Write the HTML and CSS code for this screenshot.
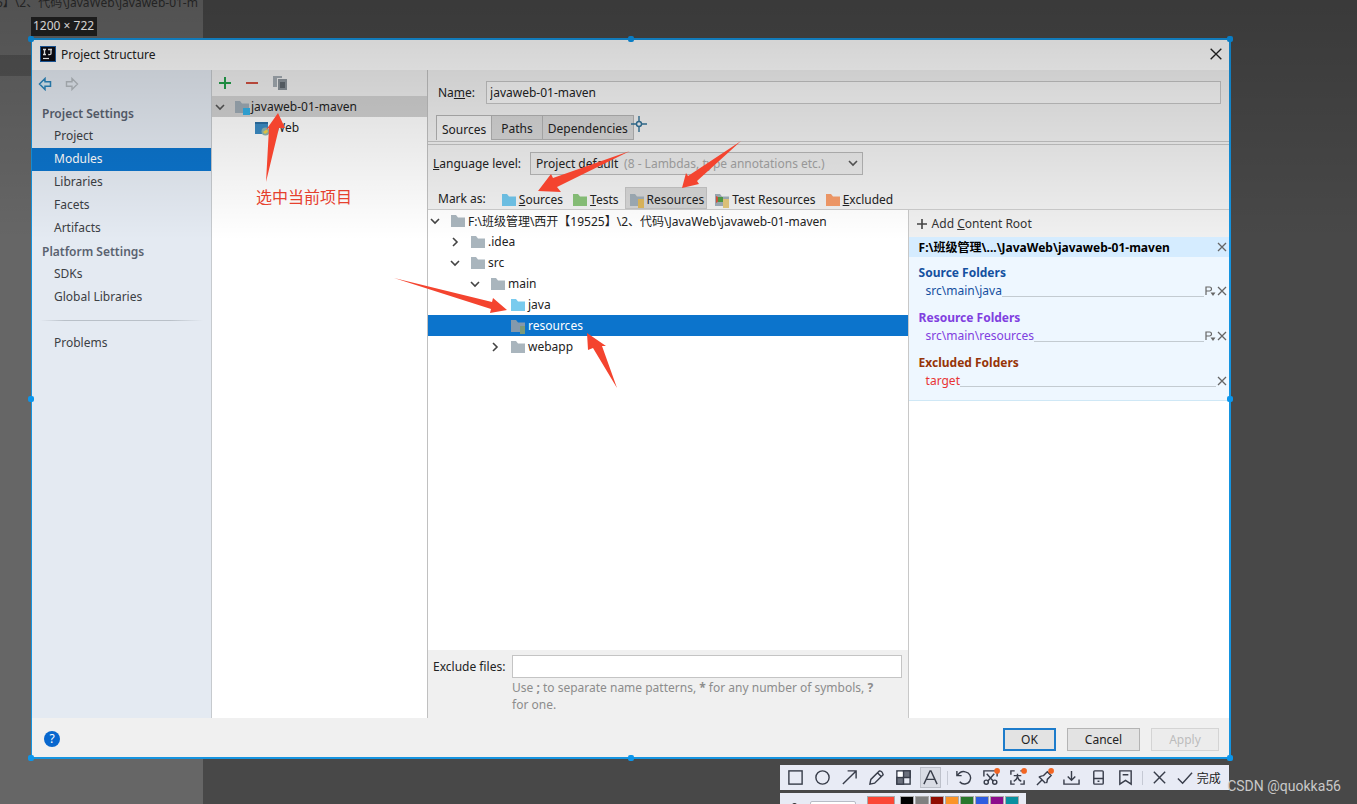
FILE: index.html
```html
<!DOCTYPE html>
<html lang="en">
<head>
<meta charset="utf-8">
<title>Project Structure</title>
<link rel="stylesheet" href="styles.css">
</head>
<body>
<svg class="defs" width="0" height="0" aria-hidden="true">
  <symbol id="folder" viewBox="0 0 16 16"><path d="M1 2h5l2 2.500h7V14H1z" fill="currentColor"/></symbol>
  <symbol id="down" viewBox="0 0 12 12"><path d="M2 4l4 4 4-4" fill="none" stroke="currentColor" stroke-width="1.600"/></symbol>
  <symbol id="right" viewBox="0 0 12 12"><path d="M4 2l4 4-4 4" fill="none" stroke="currentColor" stroke-width="1.600"/></symbol>
  <symbol id="cross" viewBox="0 0 12 12"><path d="M2 2l8 8M10 2l-8 8" fill="none" stroke="currentColor" stroke-width="1.300"/></symbol>
  <symbol id="prefix" viewBox="0 0 12 12"><path d="M2 10V2h3.500a2 2 0 0 1 0 4H2" fill="none" stroke="currentColor" stroke-width="1.200"/><path d="M6.500 7.500h5L9 11z" fill="currentColor"/></symbol>
</svg>
<div class="desktop">
  <div class="behind">5】\2、代码\JavaWeb\javaweb-01-m</div>
  <div class="behind-band"></div>
  <div class="size-tag">1200 × 722</div>

  <main class="window">
    <header class="titlebar">
      <svg class="logo" viewBox="0 0 16 16"><rect width="16" height="16" fill="#1d5fa8"/><rect x="1" y="1" width="14" height="14" fill="#0c0c14"/><path d="M3 3.500h3M4.500 3.500v5M3 8.500h3M8 3.500h4M11 3.500v4q0 1.500-2.800 1" stroke="#fff" stroke-width="1.300" fill="none"/><path d="M3 12.500h6" stroke="#fff" stroke-width="1.200"/></svg>
      <h1 class="title">Project Structure</h1>
      <button class="close" aria-label="Close"><svg width="16" height="16" viewBox="0 0 12 12"><path d="M2 2l8 8M10 2l-8 8" stroke="#222" stroke-width="1"/></svg></button>
    </header>

    <div class="content">
      <nav class="sidebar">
        <div class="history">
          <button aria-label="Back"><svg width="14" height="14" viewBox="0 0 14 14"><path d="M7 1.500L1.500 7 7 12.500V9.200h5.500V4.800H7z" fill="#d8ecf7" stroke="#2c86bd" stroke-width="1.500"/></svg></button>
          <button aria-label="Forward"><svg width="14" height="14" viewBox="0 0 14 14"><path d="M7 1.500L12.500 7 7 12.500V9.200H1.500V4.800H7z" fill="none" stroke="#b5bbc0" stroke-width="1.400"/></svg></button>
        </div>
        <h2>Project Settings</h2>
        <a href="#">Project</a>
        <a href="#" class="active">Modules</a>
        <a href="#">Libraries</a>
        <a href="#">Facets</a>
        <a href="#">Artifacts</a>
        <h2>Platform Settings</h2>
        <a href="#">SDKs</a>
        <a href="#">Global Libraries</a>
        <div class="divider"></div>
        <a href="#">Problems</a>
      </nav>

      <section class="modules">
        <div class="tools">
          <button aria-label="Add"><svg width="14" height="14" viewBox="0 0 14 14"><path d="M7 1v12M1 7h12" stroke="#23a04b" stroke-width="2"/></svg></button>
          <button aria-label="Remove"><svg width="14" height="14" viewBox="0 0 14 14"><path d="M1 7h12" stroke="#d05142" stroke-width="2"/></svg></button>
          <button aria-label="Copy"><svg width="16" height="16" viewBox="0 0 16 16"><path d="M1 1h9v2H5v9H1z" fill="#a3abb2"/><path d="M6 4h9v11H6z" fill="#8a9299"/><path d="M8 7h5v6H8z" fill="#5e666d"/></svg></button>
        </div>
        <div class="module selected">
          <svg class="chev" width="12" height="12"><use href="#down"/></svg>
          <svg class="icon" width="16" height="16" viewBox="0 0 16 16"><path d="M1 2h5l2 2.500h7V14H1z" fill="#9eabb5"/><path d="M9 9h7v7H9z" fill="#35b0e6"/></svg>
          <span>javaweb-01-maven</span>
        </div>
        <div class="module child">
          <svg class="icon" width="16" height="16" viewBox="0 0 16 16"><path d="M1 2h13v12H1z" fill="#3b8bc4"/><path d="M1 2h13v2H1z" fill="#2b6fa3"/><circle cx="11.500" cy="11.500" r="4" fill="#8fb6b0"/><path d="M9 12l4-3 1 3-3 2z" fill="#f0d24a"/></svg>
          <span>Web</span>
        </div>
        <p class="note">选中当前项目</p>
      </section>

      <section class="editor">
        <div class="name-row">
          <label for="name">Na<u>m</u>e:</label>
          <input id="name" type="text" value="javaweb-01-maven">
        </div>
        <div class="tabs" role="tablist">
          <button role="tab" class="on">Sources</button><button role="tab">Paths</button><button role="tab">Dependencies</button>
        </div>
        <div class="level-row">
          <label for="level"><u>L</u>anguage level:</label>
          <div class="combo">
            <select id="level"><option>Project default</option></select>
            <span class="hint">(8 - Lambdas, type annotations etc.)</span>
            <svg class="arrow" width="12" height="12"><use href="#down"/></svg>
          </div>
        </div>
        <div class="mark-row">
          <span class="mark-label">Mark as:</span>
          <button><svg class="blue" width="16" height="16"><use href="#folder"/></svg><span><u>S</u>ources</span></button>
          <button><svg class="green" width="16" height="16"><use href="#folder"/></svg><span><u>T</u>ests</span></button>
          <button class="pressed"><svg width="16" height="16" viewBox="0 0 16 16"><path d="M1 2h5l2 2.500h7V14H1z" fill="#9eabb5"/><path d="M9 7h6v9H9z" fill="#dcb65c"/></svg><span>Resources</span></button>
          <button><svg width="16" height="16" viewBox="0 0 16 16"><path d="M1 2h5l2 2.500h7V14H1z" fill="#9eabb5"/><path d="M2 4l6 3-6 4z" fill="#d3543c"/><path d="M4 5h5v5H4z" fill="#4f9a45"/><path d="M9 7h6v9H9z" fill="#e2c67c"/></svg><span>Test Resources</span></button>
          <button><svg class="orange" width="16" height="16"><use href="#folder"/></svg><span><u>E</u>xcluded</span></button>
        </div>

        <div class="split">
          <div class="left">
            <div class="tree" role="tree">
              <div class="node d0"><svg class="chev" width="12" height="12"><use href="#down"/></svg><svg class="icon" width="16" height="16"><use href="#folder"/></svg><span>F:\班级管理\西开【19525】\2、代码\JavaWeb\javaweb-01-maven</span></div>
              <div class="node d1"><svg class="chev" width="12" height="12"><use href="#right"/></svg><svg class="icon" width="16" height="16"><use href="#folder"/></svg><span>.idea</span></div>
              <div class="node d1"><svg class="chev" width="12" height="12"><use href="#down"/></svg><svg class="icon" width="16" height="16"><use href="#folder"/></svg><span>src</span></div>
              <div class="node d2"><svg class="chev" width="12" height="12"><use href="#down"/></svg><svg class="icon" width="16" height="16"><use href="#folder"/></svg><span>main</span></div>
              <div class="node d3"><i class="chev"></i><svg class="icon blue" width="16" height="16"><use href="#folder"/></svg><span>java</span></div>
              <div class="node d3 current"><i class="chev"></i><svg class="icon" width="16" height="16" viewBox="0 0 16 16"><path d="M1 2h5l2 2.500h7V14H1z" fill="#8499ac"/><path d="M10 8h5v8h-5z" fill="#7b9a78"/></svg><span>resources</span></div>
              <div class="node d3"><svg class="chev" width="12" height="12"><use href="#right"/></svg><svg class="icon" width="16" height="16"><use href="#folder"/></svg><span>webapp</span></div>
            </div>
            <div class="exclude">
              <label for="exclude">Exclude files:</label>
              <input id="exclude" type="text">
              <p>Use <b>;</b> to separate name patterns, <b>*</b> for any number of symbols, <b>?</b> for one.</p>
            </div>
          </div>
          <aside class="roots">
            <button class="add"><svg width="12" height="12" viewBox="0 0 12 12"><path d="M6 1v10M1 6h10" stroke="#444" stroke-width="1.600"/></svg><span>Add <u>C</u>ontent Root</span></button>
            <div class="root-head"><span>F:\班级管理\...\JavaWeb\javaweb-01-maven</span><svg width="12" height="12"><use href="#cross"/></svg></div>
            <div class="root-body">
              <div class="group source"><h3>Source Folders</h3><div class="path"><span>src\main\java</span><i></i><svg width="12" height="12"><use href="#prefix"/></svg><svg width="12" height="12"><use href="#cross"/></svg></div></div>
              <div class="group resource"><h3>Resource Folders</h3><div class="path"><span>src\main\resources</span><i></i><svg width="12" height="12"><use href="#prefix"/></svg><svg width="12" height="12"><use href="#cross"/></svg></div></div>
              <div class="group excluded"><h3>Excluded Folders</h3><div class="path"><span>target</span><i></i><svg width="12" height="12"><use href="#cross"/></svg></div></div>
            </div>
          </aside>
        </div>
      </section>
    </div>

    <footer class="footer">
      <button class="help" aria-label="Help">?</button>
      <button class="btn ok">OK</button>
      <button class="btn cancel">Cancel</button>
      <button class="btn apply" disabled>Apply</button>
    </footer>
    <i class="dot t l"></i><i class="dot t c"></i><i class="dot t r"></i>
    <i class="dot m l"></i><i class="dot m r"></i>
    <i class="dot b l"></i><i class="dot b c"></i><i class="dot b r"></i>
  </main>

  <div class="capture">
    <div class="capture-bar">
      <button aria-label="Rectangle"><svg viewBox="0 0 18 18"><rect x="2" y="2" width="14" height="14"/></svg></button>
      <button aria-label="Ellipse"><svg viewBox="0 0 18 18"><circle cx="9" cy="9" r="7"/></svg></button>
      <button aria-label="Arrow"><svg viewBox="0 0 18 18"><path d="M2 16L16 2M7 2h9v8"/></svg></button>
      <button aria-label="Pen"><svg viewBox="0 0 18 18"><path d="M2 16l1-5 9-9q3 0 4 4l-9 9zM10 4l4 4"/></svg></button>
      <button aria-label="Mosaic"><svg viewBox="0 0 18 18"><rect x="2" y="2" width="14" height="14"/><path d="M9 2h7v7H9zM2 9h7v7H2z" fill="#6b707d"/><path d="M3 3h5v5H3z" fill="#fff" stroke="none"/></svg></button>
      <button class="chosen" aria-label="Text"><svg viewBox="0 0 18 18"><path d="M2 16L8.500 2h1L16 16M4.500 11h9"/></svg></button>
      <span class="sep"></span>
      <button aria-label="Undo"><svg viewBox="0 0 18 18"><path d="M2 2v5h5M2.500 7Q6 1.500 11 3a6.500 6.500 0 1 1-6 10.500"/></svg></button>
      <button aria-label="Cut out"><svg viewBox="0 0 18 18"><path d="M2 8V2h14v6M5 5l7 8M13 5l-7 8"/><circle cx="4.500" cy="14" r="2.200"/><circle cx="13.500" cy="14" r="2.200"/><circle class="hot" cx="16" cy="2" r="3"/></svg></button>
      <button aria-label="Translate"><svg viewBox="0 0 18 18"><path d="M2 6V2h4M2 12v4h4M16 12v4h-4M12 2h2M5 7h8M9 5v2q0 4-4 6M9 8q1 4 4 5"/><circle class="hot" cx="16" cy="2" r="3"/></svg></button>
      <button aria-label="Pin"><svg viewBox="0 0 18 18"><path d="M1 17l5-5M3 8l7 7M4 8q3-1 4-1l4-4 4 4-4 4q0 2-1 4"/><circle class="hot" cx="16" cy="2" r="3"/></svg></button>
      <button aria-label="Save"><svg viewBox="0 0 18 18"><path d="M9 2v10M5 8l4 4 4-4M1 11v5h16v-5"/></svg></button>
      <button aria-label="Device"><svg viewBox="0 0 18 18"><rect x="4" y="2" width="10" height="14" rx="1"/><path d="M4 10h10M8 13h2"/></svg></button>
      <button aria-label="Favourite"><svg viewBox="0 0 18 18"><path d="M3 2h12v14l-6-4-6 4zM6 6h6"/></svg></button>
      <span class="sep"></span>
      <button aria-label="Cancel capture"><svg viewBox="0 0 18 18"><path d="M3 3l12 12M15 3L3 15"/></svg></button>
      <button class="done"><svg viewBox="0 0 18 18"><path d="M2 10l5 5L17 4"/></svg><span>完成</span></button>
    </div>
    <div class="palette">
      <i class="bullet"></i><i class="field"></i>
      <i class="sw red"></i><i class="sw c1"></i><i class="sw c2"></i><i class="sw c3"></i><i class="sw c4"></i><i class="sw c5"></i><i class="sw c6"></i><i class="sw c7"></i><i class="sw c8"></i>
    </div>
  </div>

  <div class="shade"></div>
  <svg class="marks" width="1357" height="804" viewBox="0 0 1357 804" aria-hidden="true">
    <g fill="#f4442f">
      <path d="M266 182L269 128 266 130 278 113 285 128 279 128z"/>
      <path d="M630 151L553 178 551 174 538 191 561 192 557 187z"/>
      <path d="M741 141L688 176 686 173 682 188 699 184 697 181z"/>
      <path d="M394 278L492 302 493 298 507 310 490 313 491 309z"/>
      <path d="M617 388L602 346 606 346 587 333 588 350 593 348z"/>
    </g>
    <g fill="none" stroke="#2d6587" stroke-width="1.400"><circle cx="639" cy="124" r="2.500"/><path d="M631 124h5M642 124h5M639 116v5M639 127v5"/></g>
  </svg>
  <div class="watermark">CSDN @quokka56</div>
</div>
</body>
</html>
```
FILE: styles.css
```css
* { box-sizing: border-box; }
body {
  margin: 0;
  font-family: "Noto Sans", "Noto Sans CJK SC", sans-serif;
  font-size: 12px;
  color: #222;
}
button, input, select { font: inherit; color: inherit; margin: 0; }
button { border: 0; padding: 0; background: none; }
h1, h2, h3, p { margin: 0; font-size: inherit; }
svg { display: block; flex: none; }
.defs { position: absolute; }

.desktop {
  position: relative;
  display: flex;
  flex-direction: column;
  height: 100vh;
  min-height: 600px;
  padding: 38px 126px 0 31px;
  overflow: hidden;
  background: linear-gradient(90deg, #666 203px, #484848 203px);
}
.behind {
  position: absolute;
  top: -6px;
  left: -4px;
  width: 207px;
  overflow: hidden;
  white-space: nowrap;
  line-height: 18px;
  color: #2c2c2c;
}
.behind-band { position: absolute; top: 55px; left: 0; width: 31px; height: 21px; background: #535353; }
.size-tag {
  position: absolute;
  top: 17px;
  left: 31px;
  height: 19px;
  padding: 0 3px 0 2px;
  line-height: 18px;
  background: #222;
  color: #fff;
}

.window {
  position: relative;
  flex: 1;
  min-height: 0;
  display: flex;
  flex-direction: column;
  border: 2px solid #1594e0;
  border-width: 2px 2px 2px 1px;
  background: #f0f0f0;
}
.titlebar { display: flex; align-items: center; height: 30px; padding: 0 5px 2px 8px; background: #fff; }
.logo { width: 16px; height: 16px; margin-right: 5px; }
.title { flex: 1; font-weight: 400; }

.content { flex: 1; min-height: 0; display: grid; grid-template-columns: 180px 216px 1fr; }
.sidebar { background: #e4eaf2; border-right: 1px solid #c6cace; color: #3c4044; }
.history { display: flex; align-items: flex-start; gap: 13px; height: 32px; padding: 7px 6px; }
.sidebar h2 { padding-left: 10px; line-height: 23px; font-weight: 600; color: #5a6270; }
.sidebar a { display: block; padding: 0 0 1px 22px; line-height: 22px; color: inherit; text-decoration: none; }
.sidebar .active { background: #0c74cc; color: #fff; }
.divider { height: 23px; margin: 0 8px; background: linear-gradient(90deg, transparent, #b9c0c8 15%, #b9c0c8 80%, transparent) center / 100% 1px no-repeat; }

.modules { background: #fff; border-right: 1px solid #c0c0c0; }
.tools { display: flex; align-items: center; gap: 13px; height: 26px; padding-left: 6px; background: #f0f0f0; }
.module { display: flex; align-items: center; height: 21px; padding-left: 2px; }
.selected { background: #d2d2d2; }
.module .chev { margin-right: 8px; color: #555; }
.selected .icon { margin-right: 1px; }
.child { padding-left: 42px; }
.child .icon { margin-right: 4px; }
.note { padding: 47px 0 0 44px; line-height: 24px; font-size: 16px; color: #ee432f; }

.editor { display: flex; flex-direction: column; min-width: 0; min-height: 0; }
.name-row { display: flex; align-items: center; gap: 11px; height: 45px; padding: 0 8px 0 10px; }
.name-row input { flex: 1; min-width: 0; }
input { height: 23px; padding: 0 3px; border: 1px solid #c4c4c4; background: #fff; }
.name-row input { background: #f7f7f7; }
.tabs { display: flex; height: 30px; padding-left: 8px; border-bottom: 4px double #c4c4c4; }
.tabs button { height: 25px; padding: 2px 9px 0; border: 1px solid #b2b2b2; border-left: 0; background: #d5d5d5; }
.tabs button:nth-child(3) { padding: 2px 5px 0; }
.tabs .on { padding: 2px 5px 0; border-left: 1px solid #b2b2b2; border-bottom: 0; background: #f4f4f4; }
.level-row { display: flex; align-items: center; gap: 9px; height: 37px; padding-left: 5px; }
.combo { position: relative; width: 333px; }
.combo select { display: block; width: 100%; height: 23px; padding: 0 5px; border: 1px solid #b5b5b5; border-radius: 0; background: #e8e8e8; appearance: none; }
.hint { position: absolute; left: 94px; top: 3px; color: #a2a2a2; white-space: nowrap; }
.arrow { position: absolute; right: 4px; top: 5px; color: #555; }
.mark-row { display: flex; align-items: center; gap: 4px; height: 28px; padding: 5px 0 0 10px; border-bottom: 1px solid #ccc; white-space: nowrap; }
.mark-label { margin-right: 8px; }
.mark-row button { display: flex; align-items: center; gap: 2px; height: 22px; padding: 3px 2px 0 3px; }
.mark-row .pressed { background: #d3d3d3; border: 1px solid #c2c2c2; }
.blue { color: #6fc3e8; }
.green { color: #88c178; }
.orange { color: #f39a68; }

.split { flex: 1; min-height: 0; display: grid; grid-template-columns: minmax(0, 3fr) minmax(0, 2fr); }
.left { display: flex; flex-direction: column; min-height: 0; border-right: 1px solid #c8c8c8; }
.tree { flex: 1; background: #fff; }
.node { display: flex; align-items: center; height: 21px; white-space: nowrap; }
.node .icon { margin: 0 2px 0 9px; color: #a9b5bd; }
.node .icon.blue { color: #79cbee; }
.node .chev { width: 12px; color: #444; }
.d0 { padding-left: 1px; }
.d1 { padding-left: 21px; }
.d2 { padding-left: 41px; }
.d3 { padding-left: 61px; }
.current { background: #0c74cc; color: #fff; }
.exclude { display: grid; grid-template-columns: 79px 1fr; align-items: center; padding: 5px 6px 5px 5px; }
.exclude input { width: 100%; }
.exclude p { grid-column: 2; padding: 1px 12px 0 0; line-height: 17px; color: #8c8c8c; }

.roots { background: #fff; }
.add { display: flex; align-items: center; gap: 4px; width: 100%; height: 27px; padding-left: 7px; background: #f0f0f0; color: #333; }
.root-head { display: flex; align-items: center; justify-content: space-between; height: 20px; padding: 0 1px 0 10px; background: #d5ecff; color: #000; font-weight: 700; white-space: nowrap; }
.roots svg { color: #666; }
.root-body { padding: 6px 1px 2px 10px; background: #eef7ff; border-bottom: 1px solid #cfe8f6; }
.group { height: 45px; }
.group h3 { line-height: 19px; font-weight: 700; }
.path { display: flex; align-items: center; height: 17px; padding-left: 7px; }
.path i { flex: 1; height: 12px; border-bottom: 1px solid #c3cbd1; }
.source { color: #1450a0; }
.resource { color: #8040e0; }
.excluded { color: #963408; }
.excluded .path { color: #e83434; }

.footer { display: flex; align-items: center; height: 39px; padding: 3px 10px 0 12px; background: #f0f0f0; }
.help { width: 16px; height: 16px; margin-right: auto; border-radius: 50%; background: #0867ce; color: #fff; line-height: 16px; }
.btn { height: 23px; border: 1px solid #b4b4b4; background: #e3e3e3; }
.ok { width: 53px; border: 2px solid #1d7ccb; }
.cancel { width: 73px; margin: 0 11px; }
.apply { width: 68px; border-color: #d4d4d4; background: #ececec; color: #bcbcbc; }

.dot { position: absolute; width: 6px; height: 6px; border-radius: 2px; background: #0b96ec; }
.t { top: -4px; }
.m { top: calc(50% - 3px); }
.b { bottom: -4px; }
.l { left: -4px; }
.c { left: calc(50% - 3px); }
.r { right: -4px; }

.capture { align-self: flex-end; width: 449px; height: 45px; margin-right: 2px; padding-top: 6px; }
.capture-bar { display: flex; align-items: center; justify-content: space-between; height: 25px; padding: 0 8px 0 5px; background: #e8ebf5; }
.capture-bar button { display: flex; align-items: center; justify-content: center; width: 21px; height: 21px; }
.capture-bar svg { width: 17px; height: 17px; overflow: visible; fill: none; stroke: #383d4a; stroke-width: 1.500; }
.capture-bar .hot { fill: #f26522; stroke: none; }
.capture-bar .chosen { background: #d9dce5; border: 1px solid #bcc0ca; }
.capture-bar .done { width: auto; gap: 4px; }
.sep { width: 1px; height: 14px; background: #c5c9d4; }
.palette { display: flex; align-items: flex-start; gap: 3px; width: 246px; height: 24px; margin-top: 3px; padding: 4px 8px 0 12px; background: #e8ebf5; }
.bullet { width: 5px; height: 5px; margin-top: 6px; border-radius: 50%; background: #333; }
.field { width: 46px; height: 20px; margin: 4px 9px 0 10px; border: 1px solid #b8bcc6; border-radius: 2px; background: #fff; }
.sw { flex: none; width: 12px; height: 20px; outline: 1px solid #aaa; }
.red { width: 26px; margin-right: 4px; background: #fb4736; }
.c1 { background: #000; }
.c2 { background: #808080; }
.c3 { background: #900c00; }
.c4 { background: #fb9428; }
.c5 { background: #28782c; }
.c6 { background: #2e5ce0; }
.c7 { background: #8c0c8c; }
.c8 { background: #0890a0; }

.shade { position: absolute; inset: 0 0 auto 0; height: 240px; background: linear-gradient(rgba(0, 0, 0, .2), transparent); pointer-events: none; }
.marks { position: absolute; top: 0; left: 0; pointer-events: none; }
.watermark { position: absolute; right: 16px; bottom: 9px; line-height: 18px; font-family: Roboto, sans-serif; font-size: 14px; color: #c8c8c8; }
```
